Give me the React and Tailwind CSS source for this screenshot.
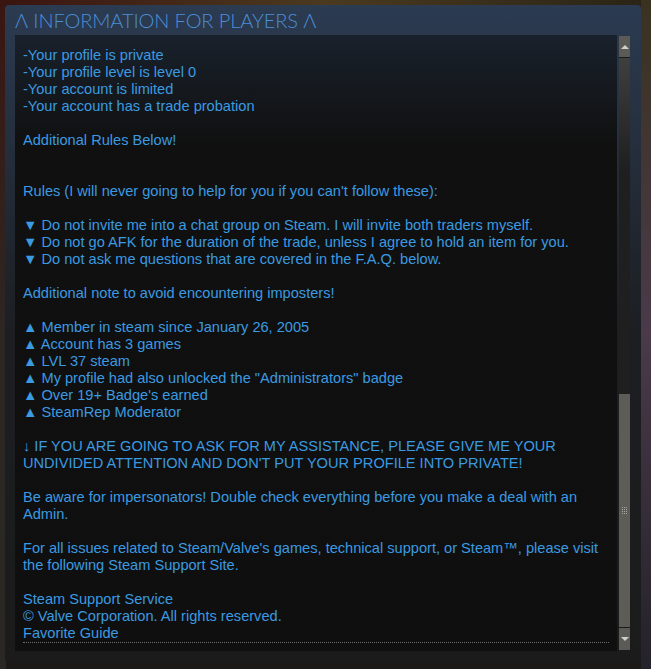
export default function App() {
  const lines = [
    '-Your profile is private',
    '-Your profile level is level 0',
    '-Your account is limited',
    '-Your account has a trade probation',
    '',
    'Additional Rules Below!',
    '',
    '',
    "Rules (I will never going to help for you if you can't follow these):",
    '',
    '▼ Do not invite me into a chat group on Steam. I will invite both traders myself.',
    '▼ Do not go AFK for the duration of the trade, unless I agree to hold an item for you.',
    '▼ Do not ask me questions that are covered in the F.A.Q. below.',
    '',
    'Additional note to avoid encountering imposters!',
    '',
    '▲ Member in steam since January 26, 2005',
    '▲ Account has 3 games',
    '▲ LVL 37 steam',
    '▲ My profile had also unlocked the "Administrators" badge',
    "▲ Over 19+ Badge's earned",
    '▲ SteamRep Moderator',
    '',
    '↓ IF YOU ARE GOING TO ASK FOR MY ASSISTANCE, PLEASE GIVE ME YOUR',
    "UNDIVIDED ATTENTION AND DON'T PUT YOUR PROFILE INTO PRIVATE!",
    '',
    'Be aware for impersonators! Double check everything before you make a deal with an',
    'Admin.',
    '',
    "For all issues related to Steam/Valve's games, technical support, or Steam™, please visit",
    'the following Steam Support Site.',
    '',
    'Steam Support Service',
    '© Valve Corporation. All rights reserved.',
  ]

  return (
    <div className="relative w-[651px] h-[669px] overflow-hidden bg-[#1b1a19]">
      {/* background art peeking around the panel */}
      <div className="absolute inset-x-0 top-0 h-[8px] bg-gradient-to-r from-[#3a1410] via-[#4a3a20] to-[#2a2416]" />
      <div className="absolute left-0 top-0 bottom-0 w-[6px] bg-gradient-to-b from-[#3a1612] via-[#2c2622] to-[#2a2824]" />
      <div className="absolute right-0 top-0 bottom-0 w-[10px] bg-gradient-to-b from-[#3a3220] via-[#4a3a4a] to-[#24222a]" />

      <div className="relative ml-[5px] mt-[5px] w-[636px] h-[657px] rounded-[4px] bg-gradient-to-b from-[#2b3b51] via-[#1c1e22] to-[#1b1b1b] flex flex-col">
        <div className="h-[30px] pl-[10px] pt-[4px] text-[20px] leading-[23px] font-light text-[#4a8fd8] tracking-[-0.1px]" style={{ fontFamily: 'Lato, "Open Sans", sans-serif' }}>
          Λ INFORMATION FOR PLAYERS Λ
        </div>

        <div className="flex">
          <div className="ml-[10px] w-[602px] h-[616px] bg-gradient-to-b from-[#19212c] via-[#101010] via-[18%] to-[#0f0f0f] pt-[12px] px-[8px] overflow-hidden" style={{ fontFamily: '"Liberation Sans", Arial, sans-serif' }}>
            {lines.map((l, i) => (
              <div key={i} className="h-[17px] text-[14.6px] leading-[17px] text-[#3b9ae0] whitespace-nowrap">
                {l}
              </div>
            ))}
            <div className="h-[17px] text-[14.6px] leading-[17px] text-[#3b9ae0] border-b border-dotted border-[#6a6a6a] box-content">
              Favorite Guide
            </div>
          </div>

          {/* scrollbar */}
          <div className="ml-[2px] mt-[1px] w-[11px] h-[614px] flex flex-col">
            <div className="h-[21px] bg-[#5b5a56] flex items-center justify-center">
              <div className="w-0 h-0 border-l-[4px] border-r-[4px] border-b-[4px] border-l-transparent border-r-transparent border-b-[#cfcfcf]" />
            </div>
            <div className="h-[1px] bg-[#1a1a1a]" />
            <div className="flex-1 flex flex-col bg-gradient-to-b from-[#3f3f3f] via-[#1f1f1f] via-[20%] to-[#1f1f1f]">
              <div className="h-[336px]" />
              <div className="flex-1 bg-[#5d5c57] flex items-center justify-center">
                <div className="grid grid-cols-3 gap-[1px]">
                  {Array.from({ length: 12 }).map((_, i) => (
                    <div key={i} className="w-[1px] h-[1px] bg-[#a8a8a8]" />
                  ))}
                </div>
              </div>
            </div>
            <div className="h-[1px] bg-[#1a1a1a]" />
            <div className="h-[22px] bg-[#5b5a56] flex items-center justify-center">
              <div className="w-0 h-0 border-l-[4px] border-r-[4px] border-t-[4px] border-l-transparent border-r-transparent border-t-[#cfcfcf]" />
            </div>
          </div>
        </div>
      </div>
    </div>
  )
}
